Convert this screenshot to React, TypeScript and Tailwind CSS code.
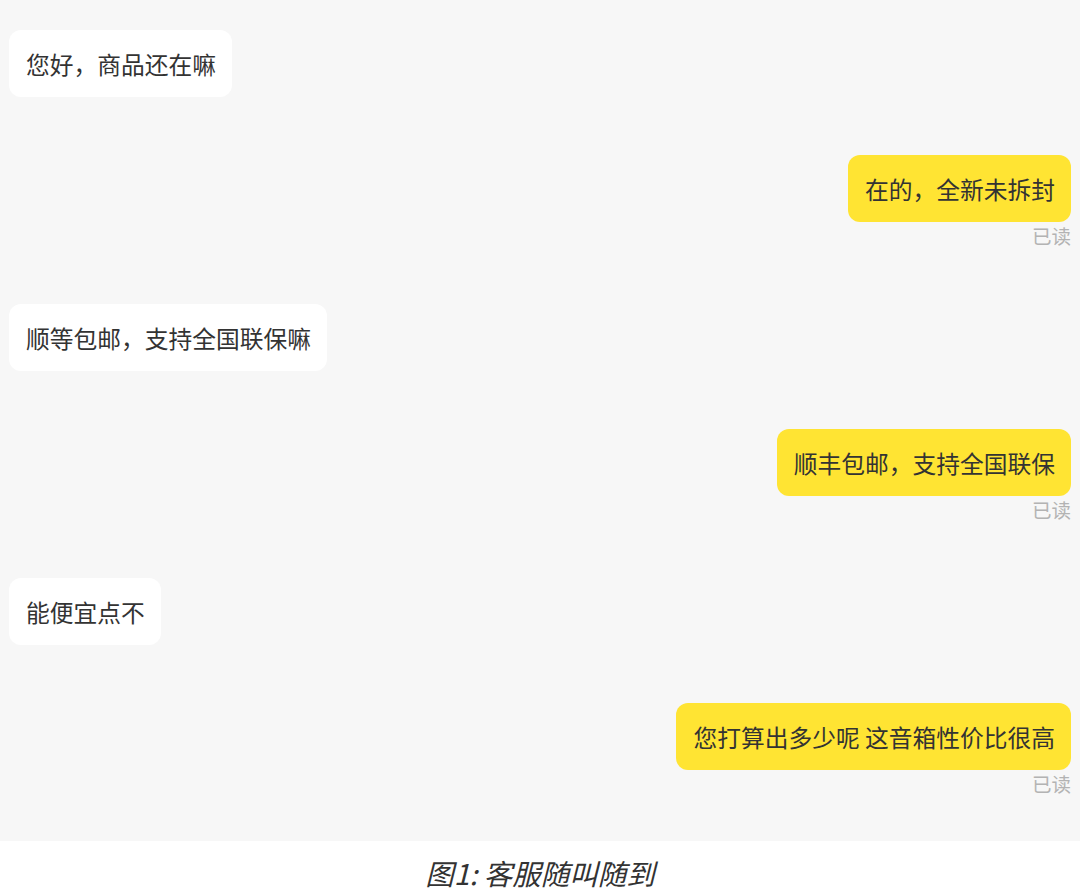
const messages = [
  { side: "left", text: "您好，商品还在嘛" },
  { side: "right", text: "在的，全新未拆封" },
  { side: "left", text: "顺等包邮，支持全国联保嘛" },
  { side: "right", text: "顺丰包邮，支持全国联保" },
  { side: "left", text: "能便宜点不" },
  { side: "right", text: "您打算出多少呢 这音箱性价比很高" },
];

const App = () => {
  return (
    <div
      className="w-[1080px] h-[895px] bg-white flex flex-col"
      style={{ fontFamily: '"Noto Sans CJK SC", "Noto Sans", sans-serif' }}
    >
      <div className="bg-[#f7f7f7] h-[841px] px-[9px] pt-[30px] flex flex-col gap-[58px]">
        {messages.map((m, i) =>
          m.side === "left" ? (
            <div key={i} className="flex">
              <div className="bg-white rounded-[12px] pl-[17px] pr-[16px] py-[20px] text-[23.75px] leading-[27px] text-[#333333]">
                {m.text}
              </div>
            </div>
          ) : (
            <div key={i} className="flex flex-col items-end">
              <div className="bg-[#ffe433] rounded-[12px] pl-[17px] pr-[16px] py-[20px] text-[23.75px] leading-[27px] text-[#333333]">
                {m.text}
              </div>
              <span className="mt-[4px] text-[19.5px] leading-[20px] text-[#b3b3b3]">已读</span>
            </div>
          )
        )}
      </div>
      <div className="flex-1 flex items-center justify-center pt-[10px]">
        <span className="italic text-[28.5px] leading-[30px] text-[#333333]">图1: 客服随叫随到</span>
      </div>
    </div>
  );
};

export default App;
